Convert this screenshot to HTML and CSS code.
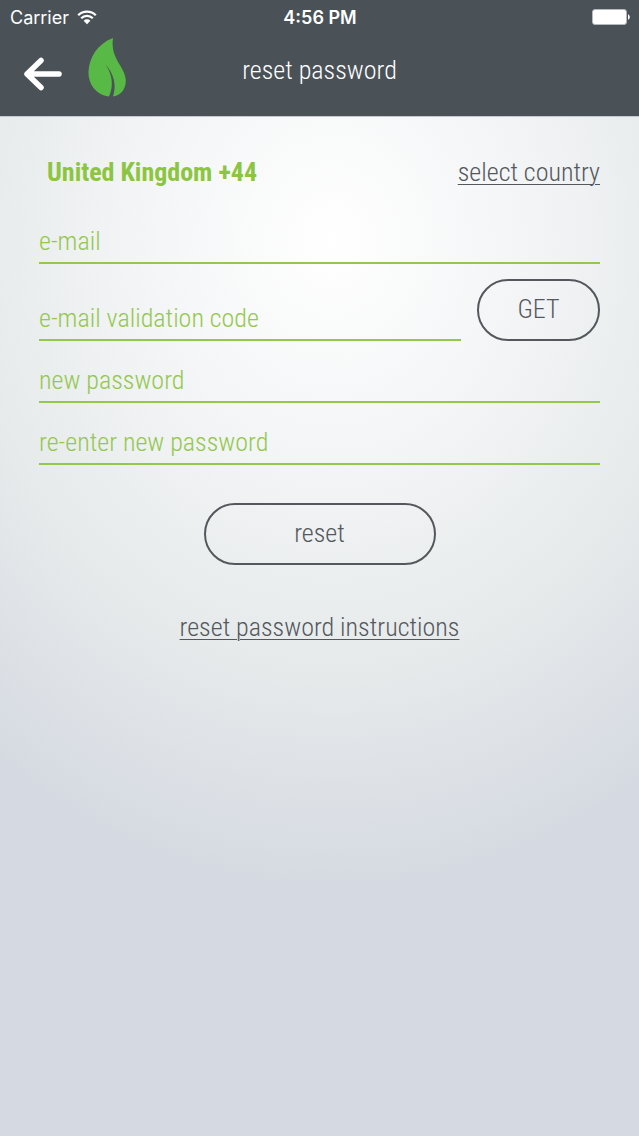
FILE: index.html
```html
<!DOCTYPE html>
<html lang="en">
<head>
    <meta charset="UTF-8">
    <meta name="viewport" content="width=device-width, initial-scale=1.0">
    <title>Reset Password</title>
    <link rel="stylesheet" href="styles.css">
</head>
<body>
    <header class="header">
        <div class="status-bar">
            <div class="carrier">
                <span>Carrier</span>
                <svg class="wifi" viewBox="0 0 20 15" aria-hidden="true">
                    <path d="M1.2 5.2a12.500 12.500 0 0 1 17.600 0M4.200 8.300a8.300 8.300 0 0 1 11.600 0" fill="none" stroke="#fff" stroke-width="2.300"/>
                    <path d="M6.600 10.700a4.900 4.900 0 0 1 6.800 0L10 14.200z" fill="#fff"/>
                </svg>
            </div>
            <span class="time">4:56 PM</span>
            <svg class="battery" viewBox="0 0 38 16" aria-hidden="true">
                <rect x="0.5" y="0.5" width="34" height="15" rx="2.5" fill="#fff" stroke="#b4b9bd"/>
                <path d="M36 5.2c2.4.9 2.4 4.7 0 5.6z" fill="#fff"/>
            </svg>
        </div>
        <nav class="nav">
            <div class="nav-left">
                <button type="button" class="back" aria-label="Back">
                    <svg viewBox="0 0 38 34" aria-hidden="true">
                        <path d="M17 3.5L3 17l14 13.5M3.5 17H35" fill="none" stroke="#fff" stroke-width="5.5" stroke-linecap="round" stroke-linejoin="round"/>
                    </svg>
                </button>
                <svg class="leaf" viewBox="0 0 38 60" aria-hidden="true">
                    <path d="M25 0C9 6 1 20 .5 34 .3 46 8 57 21 58.500c4.500-10 4-21-3.500-32 8 9 11.500 20 7.500 32C34 57 38 50 37.800 42 37 28 22 21 25 0z" fill="#58b947"/>
                </svg>
            </div>
            <h1 class="title">reset password</h1>
        </nav>
    </header>

    <main class="content">
        <form class="reset-form" id="resetForm">
            <div class="country-row">
                <strong class="country">United Kingdom +44</strong>
                <a href="#" class="link">select country</a>
            </div>

            <input type="email" class="field" name="email" placeholder="e-mail" aria-label="e-mail">

            <div class="code-row">
                <input type="text" class="field" name="code" placeholder="e-mail validation code" aria-label="e-mail validation code">
                <button type="button" class="btn btn-get">GET</button>
            </div>

            <input type="password" class="field" name="password" placeholder="new password" aria-label="new password">
            <input type="password" class="field" name="confirm" placeholder="re-enter new password" aria-label="re-enter new password">

            <button type="submit" class="btn btn-reset">reset</button>
        </form>
        <a href="#" class="link">reset password instructions</a>
    </main>
</body>
</html>
```
FILE: styles.css
```css
* {
    box-sizing: border-box;
}
body {
    margin: 0;
    min-height: 100vh;
    font-family: "Roboto Condensed", Roboto, sans-serif;
    font-size: 26px;
    font-weight: 300;
    line-height: 32px;
    color: #54585c;
    background: #d5dae2 radial-gradient(ellipse 560px 650px at 52% 240px, #ffffff 0%, #f5f6f7 30%, #e6eaeb 66%, #d5dae2 100%) no-repeat;
}
.header {
    height: 117px;
    border-bottom: 1px solid #c3c9cf;
    background-color: #4a5258;
    color: #fff;
}
.status-bar {
    display: grid;
    grid-template-columns: 1fr auto 1fr;
    align-items: center;
    height: 32px;
    padding: 0 9px 0 10px;
    font-family: Inter, sans-serif;
    font-size: 18px;
    font-weight: 400;
}
.carrier {
    display: flex;
    align-items: center;
    gap: 8px;
}
.carrier span,
.time {
    padding-top: 2px;
}
.wifi {
    width: 20px;
    height: 15px;
}
.time {
    font-weight: 600;
}
.battery {
    width: 38px;
    height: 16px;
    justify-self: end;
}
.nav {
    display: grid;
    grid-template-columns: 1fr auto 1fr;
    align-items: center;
    padding: 6px 24px 0;
}
.nav-left {
    display: flex;
    align-items: center;
    gap: 26px;
}
.back {
    display: flex;
    margin-top: 12px;
    padding: 0;
    border: none;
    background: none;
    cursor: pointer;
}
.back svg {
    width: 38px;
    height: 34px;
}
.leaf {
    width: 38px;
    height: 60px;
}
.title {
    margin: 0;
    padding-top: 4px;
    font-size: 26px;
    font-weight: 300;
}
.content {
    display: flex;
    flex-direction: column;
    align-items: center;
    gap: 46px;
    padding: 39px;
}
.reset-form {
    display: flex;
    flex-direction: column;
    width: 100%;
}
.country-row {
    display: flex;
    justify-content: space-between;
    margin-bottom: 14px;
    padding-left: 8px;
}
.country {
    font-weight: 700;
    color: #8cc540;
}
.link {
    color: #54585c;
    text-decoration: underline;
    text-decoration-thickness: 1px;
    text-underline-offset: 3px;
}
.field {
    width: 100%;
    height: 62px;
    padding: 18px 0 0;
    border: none;
    border-bottom: 2px solid #93c84c;
    border-radius: 0;
    outline: none;
    background: none;
    font: inherit;
    color: #54585c;
}
.field::placeholder {
    color: #93c84c;
    opacity: 1;
}
.code-row {
    display: flex;
    align-items: flex-end;
    gap: 16px;
    padding-top: 15px;
}
.btn {
    height: 62px;
    padding: 0 0 2px;
    border: 2px solid #54585c;
    border-radius: 31px;
    background: none;
    font: inherit;
    color: #54585c;
    cursor: pointer;
}
.btn-get {
    flex: 0 0 123px;
}
.btn-reset {
    align-self: center;
    width: 232px;
    margin-top: 38px;
}
```
